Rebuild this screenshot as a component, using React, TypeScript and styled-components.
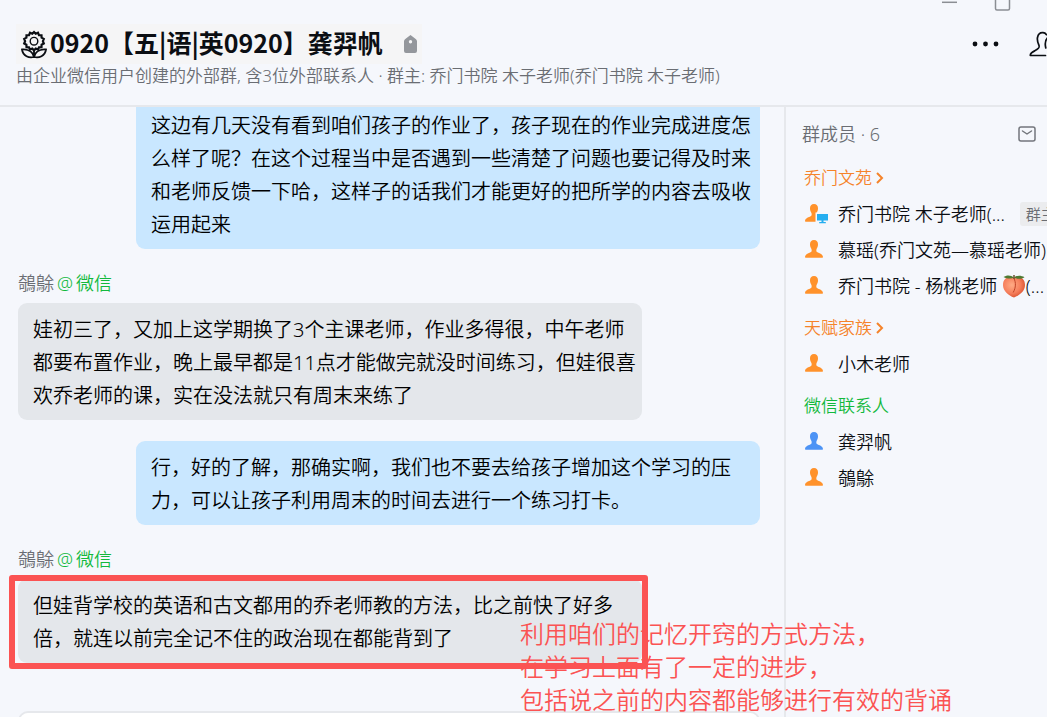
import React from "react";
import styled, { createGlobalStyle } from "styled-components";

const Global = createGlobalStyle`
  *, *::before, *::after { box-sizing: border-box; }
  body {
    margin: 0;
    background: #f5f7fc;
    color: #0b0e13;
    font-family: "Noto Sans", "Noto Sans CJK SC", sans-serif;
    font-weight: 350;
  }
  button { font: inherit; color: inherit; background: none; border: 0; padding: 0; cursor: pointer; }
  h1, h2, h3, p, ul { margin: 0; padding: 0; font-weight: inherit; }
  ul { list-style: none; }
`;

const Shell = styled.div`
  display: flex;
  flex-direction: column;
  height: 100vh;
  overflow: hidden;
`;

const Header = styled.header`
  position: relative;
  display: flex;
  justify-content: space-between;
  flex: none;
  height: 107px;
  padding: 24px 0 0 16px;
  border-bottom: 2px solid #e6e8ec;
`;

const TitleRow = styled.div`
  display: flex;
  align-items: center;
  width: fit-content;
  height: 40px;
  padding: 0 5px;
  background: #f5f5f6;
`;

const Title = styled.h1`
  margin: 0 21px 0 3px;
  padding-bottom: 3px;
  font-family: "Noto Sans CJK SC", sans-serif;
  font-size: 25px;
  line-height: 37px;
  font-weight: 700;
  white-space: nowrap;
`;

const Subtitle = styled.p`
  font-size: 17px;
  line-height: 24px;
  color: #6a6d73;
  white-space: nowrap;
`;

const Actions = styled.div`
  display: flex;
  gap: 28px;
  align-items: flex-start;
  width: 76px;
  flex: none;
  overflow: hidden;
  button { flex: none; height: 40px; display: flex; align-items: center; }
`;

const WindowControls = styled.div`
  position: absolute;
  top: 0;
  right: 35px;
  display: flex;
  gap: 36px;
  button { display: block; height: 12px; }
  svg { display: block; }
`;

const Body = styled.div`
  display: flex;
  flex: 1;
  min-height: 0;
`;

const Chat = styled.main`
  position: relative;
  flex: 1;
  min-width: 0;
  display: flex;
  flex-direction: column;
  padding: 0 24px 0 18px;
`;

const Bubble = styled.p<{ $own?: boolean; $continued?: boolean }>`
  flex: none;
  width: calc(100% - 118px);
  align-self: ${(p) => (p.$own ? "flex-end" : "flex-start")};
  padding: ${(p) => (p.$continued ? "2px" : "10px")} 6px 8px 15px;
  border-radius: ${(p) => (p.$continued ? "0 0 9px 9px" : "9px")};
  background: ${(p) => (p.$own ? "#c9e7ff" : "#e4e7eb")};
  color: #000;
  font-size: 20px;
  line-height: 33px;
  white-space: nowrap;
`;

const Sender = styled.div`
  display: flex;
  gap: 3px;
  flex: none;
  margin: 22px 0 8px;
  font-size: 18px;
  line-height: 24px;
  color: #6a6d73;
  b { font-weight: inherit; color: #12b93c; }
`;

const Spacer = styled.div`
  flex: none;
  height: 21px;
`;

const Marked = styled.div`
  position: relative;
  display: flex;
  flex-direction: column;
  &::after {
    content: "";
    position: absolute;
    top: -4px;
    left: -9px;
    width: calc(100% - 103px);
    bottom: -6px;
    border: 6px solid #fb5353;
    border-radius: 3px;
  }
`;

const Note = styled.p`
  position: absolute;
  z-index: 2;
  top: 510px;
  left: 520px;
  font-size: 24px;
  line-height: 33px;
  color: #fb5353;
  white-space: nowrap;
`;

const Composer = styled.div`
  flex: none;
  height: 120px;
  margin-top: 48px;
  border: 2px solid #e6e8ec;
  border-radius: 10px;
  background: #fff;
`;

const Sidebar = styled.aside`
  flex: none;
  width: 263px;
  overflow: hidden;
  padding-left: 16px;
  border-left: 2px solid #e6e8ec;
`;

const SideHead = styled.div`
  display: flex;
  align-items: center;
  justify-content: space-between;
  height: 53px;
  padding-right: 11px;
  color: #6a6d73;
  h2 { font-size: 18px; line-height: 24px; }
  svg { display: block; }
`;

const GroupName = styled.h3<{ $green?: boolean }>`
  display: flex;
  align-items: center;
  gap: 3px;
  height: 36px;
  padding-left: 2px;
  font-size: 17px;
  line-height: 24px;
  color: ${(p) => (p.$green ? "#12b93c" : "#f5832a")};
  ul + & { margin-top: 6px; }
`;

const Member = styled.li`
  display: flex;
  align-items: center;
  height: 36px;
  padding-left: 3px;
  font-size: 18px;
  line-height: 24px;
  white-space: nowrap;
  svg { flex: none; }
`;

const Avatar = styled.svg`
  margin-right: 8px;
`;

const Tag = styled.span`
  flex: none;
  margin-left: 15px;
  padding: 0 6px;
  border-radius: 3px;
  background: #ebecee;
  color: #6a6d73;
  font-size: 15px;
  line-height: 24px;
`;

const Person = ({ color = "#ff922b", desk = false }: { color?: string; desk?: boolean }) => (
  <Avatar width="25" height="22" viewBox="0 0 25 22" aria-hidden="true">
    <path
      fill={color}
      d="M9 1c2.600 0 4 1.700 4 4.300 0 2-.6 3.300-1.300 4.500-.5.900-.6 2.700.3 3.300 2 1.300 5.800 2 6 4.900 0 .5-.3.700-.7.700H.7c-.4 0-.7-.2-.7-.7.2-2.900 4-3.600 6-4.900.9-.6.8-2.400.3-3.300C5.600 8.600 5 7.300 5 5.300 5 2.700 6.400 1 9 1z"
    />
    {desk && (
      <>
        <path fill="#f5f7fc" d="M10.500 9.500H25V22H10.500z" />
        <path fill="#25aef0" d="M12 11h11v6.500h-4.500v1.500h2.300v1.200h-6.600V19h2.300v-1.500H12z" />
      </>
    )}
  </Avatar>
);

const Peach = () => (
  <svg width="24" height="24" viewBox="0 0 24 24" role="img" aria-label="桃">
    <defs>
      <radialGradient id="peach" cx="0.4" cy="0.4" r="0.65">
        <stop offset="0" stopColor="#ffab85" />
        <stop offset="0.6" stopColor="#f67f5c" />
        <stop offset="1" stopColor="#d9512f" />
      </radialGradient>
    </defs>
    <path fill="url(#peach)" d="M12 3.500c5-2 11 .5 11 7.500 0 6-5.500 10.500-11 12.500C6.500 21.500 1 17 1 11 1 4 7 1.500 12 3.500z" />
    <path fill="none" stroke="#bf4328" strokeWidth="1" d="M12 4.500c2 4 2 9-.8 14" />
    <path fill="#4f7a33" d="M12 3.600C9 .8 4.500.800 1.500 3 5 4.800 9.500 5 12 3.600zM12 3.600c2.500-2.300 7-2.500 10.500-.3C19 5.300 15 5.300 12 3.600z" />
    <path stroke="#6b5030" strokeWidth="1.500" d="M12 5V1" />
  </svg>
);

const Chevron = () => (
  <svg width="10" height="12" viewBox="0 0 10 12" fill="none" stroke="currentColor" strokeWidth="2" aria-hidden="true">
    <path d="M2 1l5 5-5 5" />
  </svg>
);

const Flower = () => (
  <svg width="26" height="29" viewBox="0 0 26 29" fill="none" stroke="#0b0e13" strokeWidth="1.800" aria-hidden="true">
    <path d="M13 2l1.700 1.800 2.300-1 1 2.300 2.500.1.100 2.500 2.200 1.200-.9 2.300.9 2.300-2.200 1.200-.1 2.500-2.500.1-1 2.300-2.300-1L13 20.500l-1.700-1.900-2.300 1-1-2.300-2.500-.1-.1-2.500-2.200-1.200.9-2.300-.9-2.300 2.200-1.200.1-2.500 2.500-.1 1-2.300 2.300 1z" strokeWidth="2.200" />
    <circle cx="13" cy="11.200" r="3.800" strokeWidth="1.400" />
    <path d="M13 20v8M13 27C8 28.500 2 26 1 19.500c5-.5 10.500 1.500 12 7.500 1.500-6 7-8 12-7.500C24 26 18 28.500 13 27z" />
  </svg>
);

export default function App() {
  return (
    <>
      <Global />
      <Shell>
        <Header>
          <div>
            <TitleRow>
              <Flower />
              <Title>0920【五|语|英0920】龚羿帆</Title>
              <svg width="13" height="18" viewBox="0 0 13 18" aria-hidden="true">
                <path fill="#94979c" fillRule="evenodd" d="M6.500 0 12 4.300c.6.500 1 1.200 1 2V16a2 2 0 0 1-2 2H2a2 2 0 0 1-2-2V6.300c0-.8.4-1.500 1-2zM6.500 5a1.700 1.700 0 1 0 0 3.400 1.700 1.700 0 0 0 0-3.400z" />
              </svg>
            </TitleRow>
            <Subtitle>由企业微信用户创建的外部群, 含3位外部联系人 · 群主: 乔门书院 木子老师(乔门书院 木子老师)</Subtitle>
          </div>
          <Actions>
            <button aria-label="更多">
              <svg width="30" height="6" viewBox="0 0 30 6" fill="#0b0e13">
                <circle cx="4" cy="3" r="2.400" />
                <circle cx="14.500" cy="3" r="2.400" />
                <circle cx="25" cy="3" r="2.400" />
              </svg>
            </button>
            <button aria-label="群成员">
              <svg width="34" height="26" viewBox="0 0 34 26" fill="none" stroke="#0b0e13" strokeWidth="1.700" strokeLinecap="round" strokeLinejoin="round">
                <path d="M16.500 24.500H1.300c-.2-2.500 2-3.500 4.500-4.700 4-2 5.200-3.300 4-6C8.500 11 8 9 8.500 6.500 9.200 3 11.500 1.500 14 1.700c1.500.1 2.700.8 3.500 2" />
                <path d="M33 24.500H20M16.800 17c-1-4-1-8 2.500-11" />
              </svg>
            </button>
          </Actions>
          <WindowControls>
            <button aria-label="最小化">
              <svg width="17" height="12" viewBox="0 0 17 12" stroke="#8b8e94" strokeWidth="1.500"><path d="M1 2.300h15" /></svg>
            </button>
            <button aria-label="最大化">
              <svg width="18" height="12" viewBox="0 0 18 12" fill="none" stroke="#8b8e94" strokeWidth="1.500"><rect x="1.500" y="-5" width="14" height="15" rx="1.500" /></svg>
            </button>
          </WindowControls>
        </Header>
        <Body>
          <Chat>
            <Bubble $own $continued>
              这边有几天没有看到咱们孩子的作业了，孩子现在的作业完成进度怎<br />
              么样了呢？在这个过程当中是否遇到一些清楚了问题也要记得及时来<br />
              和老师反馈一下哈，这样子的话我们才能更好的把所学的内容去吸收<br />
              运用起来
            </Bubble>
            <Sender>鵸鵌<b>@</b><b>微信</b></Sender>
            <Bubble>
              娃初三了，又加上这学期换了3个主课老师，作业多得很，中午老师<br />
              都要布置作业，晚上最早都是11点才能做完就没时间练习，但娃很喜<br />
              欢乔老师的课，实在没法就只有周末来练了
            </Bubble>
            <Spacer />
            <Bubble $own>
              行，好的了解，那确实啊，我们也不要去给孩子增加这个学习的压<br />
              力，可以让孩子利用周末的时间去进行一个练习打卡。
            </Bubble>
            <Sender>鵸鵌<b>@</b><b>微信</b></Sender>
            <Marked>
              <Bubble>
                但娃背学校的英语和古文都用的乔老师教的方法，比之前快了好多<br />
                倍，就连以前完全记不住的政治现在都能背到了
              </Bubble>
            </Marked>
            <Composer />
            <Note>
              利用咱们的记忆开窍的方式方法，<br />
              在学习上面有了一定的进步，<br />
              包括说之前的内容都能够进行有效的背诵
            </Note>
          </Chat>
          <Sidebar>
            <SideHead>
              <h2>群成员 · 6</h2>
              <button aria-label="邀请">
                <svg width="18" height="16" viewBox="0 0 18 16" fill="none" stroke="#73767c" strokeWidth="1.500" strokeLinecap="round" strokeLinejoin="round">
                  <rect x="1" y="1" width="16" height="14" rx="2" />
                  <path d="M4.500 5 9 8l4.500-3" />
                </svg>
              </button>
            </SideHead>
            <GroupName>乔门文苑<Chevron /></GroupName>
            <ul>
              <Member><Person desk />乔门书院 木子老师(...<Tag>群主</Tag></Member>
              <Member><Person />慕瑶(乔门文苑—慕瑶老师)</Member>
              <Member><Person />乔门书院 - 杨桃老师&nbsp;<Peach />(...</Member>
            </ul>
            <GroupName>天赋家族<Chevron /></GroupName>
            <ul>
              <Member><Person />小木老师</Member>
            </ul>
            <GroupName $green>微信联系人</GroupName>
            <ul>
              <Member><Person color="#4c93f5" />龚羿帆</Member>
              <Member><Person />鵸鵌</Member>
            </ul>
          </Sidebar>
        </Body>
      </Shell>
    </>
  );
}
